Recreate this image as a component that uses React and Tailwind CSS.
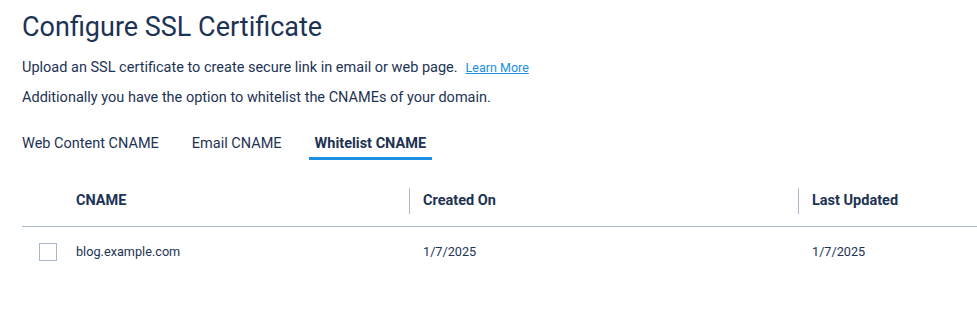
export default function App() {
  const tabs = ['Web Content CNAME', 'Email CNAME', 'Whitelist CNAME']
  const active = 2
  return (
    <div className="w-[977px] h-[311px] overflow-hidden bg-white text-[#1d3354]" style={{ fontFamily: 'Roboto, "Noto Sans", sans-serif' }}>
      <div className="pl-[22px] pt-[9px]">
        <h1 className="text-[27px] leading-[36px] font-normal">Configure SSL Certificate</h1>
        <p className="mt-[13px] text-[14.5px] leading-[20px]">
          Upload an SSL certificate to create secure link in email or web page.
          <a href="#" className="ml-[8px] text-[12.5px] text-[#1a8fe3] underline">Learn More</a>
        </p>
        <p className="mt-[10px] text-[14.5px] leading-[20px]">Additionally you have the option to whitelist the CNAMEs of your domain.</p>

        {/* tabs */}
        <div className="mt-[26px] -ml-[6px] flex gap-[21px]">
          {tabs.map((t, i) => (
            <button
              key={t}
              className={
                i === active
                  ? 'px-[6px] pb-[3px] text-[14.5px] leading-[20px] font-bold border-b-[3px] border-[#1a8fe3]'
                  : 'px-[6px] pb-[3px] text-[14.5px] leading-[20px] border-b-[3px] border-transparent'
              }
            >
              {t}
            </button>
          ))}
        </div>

        {/* table */}
        <div className="mt-[16px] w-[1000px]">
          <div className="grid grid-cols-[54px_334px_388px_1fr] h-[51px] items-center border-b border-[#a9b8c9] text-[14.5px] font-bold">
            <div />
            <div className="h-[26px] flex items-center border-r border-[#a9b8c9]">CNAME</div>
            <div className="pl-[13px]">Created On</div>
            <div className="h-[26px] flex items-center pl-[13px] border-l border-[#a9b8c9]">Last Updated</div>
          </div>
          <div className="grid grid-cols-[54px_334px_388px_1fr] h-[50px] items-center text-[12.7px]">
            <div className="pl-[17px]">
              <span className="block w-[18px] h-[18px] border border-[#a9b8c9] bg-white" />
            </div>
            <div>blog.example.com</div>
            <div className="pl-[13px]">1/7/2025</div>
            <div className="pl-[14px]">1/7/2025</div>
          </div>
        </div>
      </div>
    </div>
  )
}
